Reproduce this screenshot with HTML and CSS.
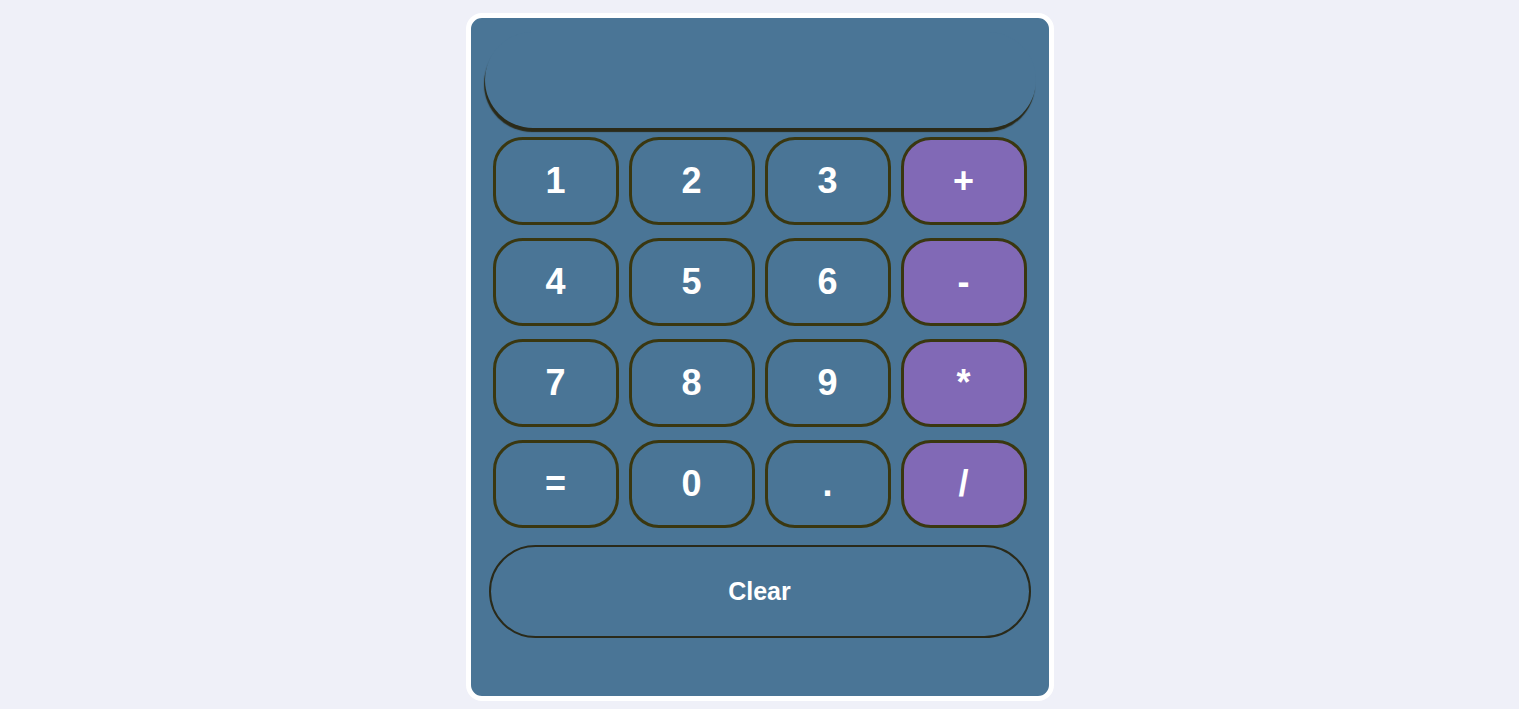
FILE: index.html
```html
<!DOCTYPE html>
<html lang="en">
<head>
<meta charset="utf-8">
<title>Calculator</title>
<link rel="stylesheet" href="styles.css">
</head>
<body>
<div class="calc">
  <div class="display"></div>
  <div class="keys">
    <button class="key">1</button>
    <button class="key">2</button>
    <button class="key">3</button>
    <button class="key op">+</button>
    <button class="key">4</button>
    <button class="key">5</button>
    <button class="key">6</button>
    <button class="key op">-</button>
    <button class="key">7</button>
    <button class="key">8</button>
    <button class="key">9</button>
    <button class="key op">*</button>
    <button class="key">=</button>
    <button class="key">0</button>
    <button class="key">.</button>
    <button class="key op">/</button>
  </div>
  <button class="clear">Clear</button>
</div>
</body>
</html>
```
FILE: styles.css
```css
html, body {
  margin: 0;
  padding: 0;
  background: #eff0f8;
  font-family: "Liberation Sans", Arial, sans-serif;
}
.calc {
  box-sizing: content-box;
  width: 578px;
  height: 678px;
  margin: 13px auto 0;
  background: #4a7596;
  border: 5px solid #ffffff;
  border-radius: 16px;
  display: flex;
  flex-direction: column;
  align-items: flex-start;
}
.display {
  width: 551px;
  height: 96px;
  margin: 14px 0 0 14px;
  border-radius: 50px;
  background: #4a7596;
  box-shadow: -1px 4px 1px #2b2a18;
}
.keys {
  display: grid;
  grid-template-columns: repeat(4, 126px);
  grid-auto-rows: 88px;
  column-gap: 10px;
  row-gap: 13px;
  margin: 9px 0 0 22px;
}
.key {
  box-sizing: border-box;
  margin: 0;
  padding: 0;
  background: #4a7596;
  border: 3px solid #3a3710;
  border-radius: 30px;
  color: #ffffff;
  font-family: "Liberation Sans", Arial, sans-serif;
  font-weight: bold;
  font-size: 36px;
}
.key.op {
  background: #8169b6;
}
.clear {
  box-sizing: border-box;
  width: 542px;
  height: 93px;
  margin: 17px 0 0 18px;
  padding: 0;
  background: #4a7596;
  border: 2px solid #2a2a1a;
  border-radius: 47px;
  color: #ffffff;
  font-family: "Liberation Sans", Arial, sans-serif;
  font-weight: bold;
  font-size: 25px;
}
```
